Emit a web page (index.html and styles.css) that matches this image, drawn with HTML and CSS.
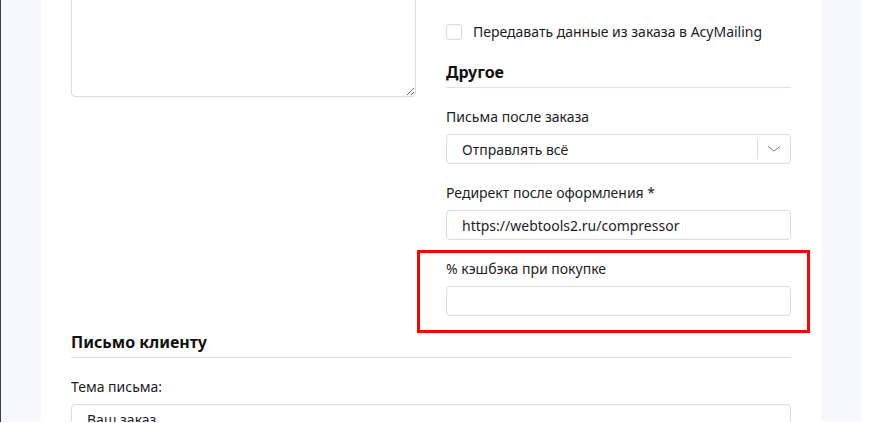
FILE: index.html
```html
<!DOCTYPE html>
<html lang="ru">
<head>
  <meta charset="UTF-8">
  <meta name="viewport" content="width=device-width, initial-scale=1.0">
  <title>Настройки заказа</title>
  <link rel="stylesheet" href="styles.css">
</head>
<body>
  <div id="layout">
    <div class="rail"></div>
    <div class="shell">
      <div class="panel">
        <div class="columns">
          <!-- левая колонка -->
          <div class="col">
            <textarea class="area"></textarea>
          </div>
          <!-- правая колонка -->
          <div class="col col-right">
            <label class="check">
              <span class="box"></span>
              Передавать данные из заказа в AcyMailing
            </label>
            <h3 class="section">Другое</h3>
            <div class="field">
              <div class="label">Письма после заказа</div>
              <div class="select">
                <span class="select-value">Отправлять всё</span>
                <span class="select-arrow">
                  <svg width="14" height="8" viewBox="0 0 14 8"><path d="M1 1.5 L7 6 L13 1.5" fill="none" stroke="#777" stroke-width="1"/></svg>
                </span>
              </div>
            </div>
            <div class="field">
              <div class="label">Редирект после оформления *</div>
              <input class="input" type="text" value="https://webtools2.ru/compressor">
            </div>
            <div class="field marked">
              <div class="label">% кэшбэка при покупке</div>
              <input class="input" type="text" value="">
            </div>
          </div>
        </div>
        <h3 class="section">Письмо клиенту</h3>
        <div class="field">
          <div class="label">Тема письма:</div>
          <input class="input" type="text" value="Ваш заказ">
        </div>
      </div>
    </div>
  </div>
</body>
</html>
```

FILE: styles.css
```css
body {
  margin: 0;
  padding: 0;
  background: #fff;
  font-family: "Noto Sans", Arial, sans-serif;
  font-size: 14px;
  color: #1d1d1f;
  height: 423px;
  overflow: hidden;
}
#layout {
  display: flex;
  height: 422px;
}
.rail {
  width: 1px;
  background: #3b3d52;
}
.shell {
  width: 780px;
  padding: 0 40px;
  background: #f7f8fc;
}
.panel {
  background: #fff;
  height: 100%;
  padding: 0 30px;
  overflow: hidden;
}
.columns {
  display: grid;
  grid-template-columns: 1fr 1fr;
  gap: 30px;
}
.area {
  display: block;
  box-sizing: border-box;
  width: 100%;
  height: 118px;
  margin-top: -21px;
  border: 1px solid #dcdcdc;
  border-radius: 4px;
  resize: vertical;
}
.col-right {
  padding-top: 24px;
}
.col-right .field:last-child {
  margin-bottom: 0;
}
.check {
  display: flex;
  align-items: center;
  gap: 11px;
  height: 16px;
  line-height: 16px;
}
.box {
  width: 14px;
  height: 14px;
  border: 1px solid #dcdcdc;
  border-radius: 3px;
  margin-top: -1px;
}
.section {
  margin: 22px 0 19px;
  padding-bottom: 5px;
  font-size: 16px;
  line-height: 20px;
  font-weight: 700;
  color: #111;
  border-bottom: 1px solid #e1e0ee;
}
.panel > .section {
  margin-top: 16px;
}
.field {
  margin-bottom: 19px;
  position: relative;
}
.label {
  line-height: 20px;
  margin-bottom: 7px;
}
.input,
.select {
  display: block;
  box-sizing: border-box;
  width: 100%;
  height: 30px;
  border: 1px solid #dcdcdc;
  border-radius: 4px;
  padding: 0 15px;
  font-family: inherit;
  font-size: 14px;
  color: #1d1d1f;
  background: #fff;
}
.select {
  display: flex;
  align-items: center;
  padding-right: 0;
}
.select-value {
  flex: 1;
}
.select-arrow {
  display: flex;
  align-items: center;
  justify-content: center;
  width: 32px;
  height: 20px;
  border-left: 1px solid #dcdcdc;
}
.marked::after {
  content: "";
  position: absolute;
  top: -9px;
  left: -29px;
  right: -19px;
  bottom: -17px;
  border: 3px solid #f00;
}
```
